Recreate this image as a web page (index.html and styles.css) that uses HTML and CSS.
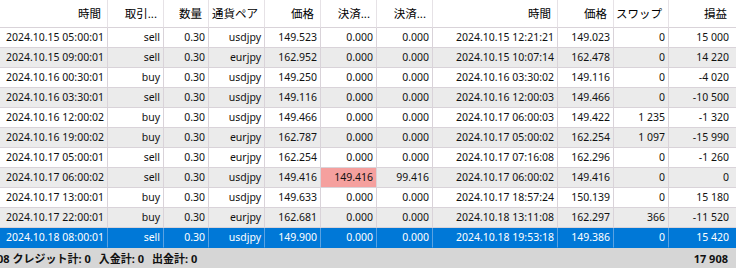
FILE: index.html
```html
<!DOCTYPE html>
<html lang="ja">
<head>
<meta charset="utf-8">
<link rel="stylesheet" href="styles.css">
</head>
<body>
<div class="view">
  <div class="row head">
    <div class="c">時間</div><div class="c">取引...</div><div class="c">数量</div><div class="c">通貨ペア</div><div class="c">価格</div><div class="c">決済...</div><div class="c">決済...</div><div class="c">時間</div><div class="c">価格</div><div class="c">スワップ</div><div class="c">損益</div>
  </div>
  <div class="row">
    <div class="c">2024.10.15 05:00:01</div><div class="c">sell</div><div class="c">0.30</div><div class="c">usdjpy</div><div class="c">149.523</div><div class="c">0.000</div><div class="c">0.000</div><div class="c">2024.10.15 12:21:21</div><div class="c">149.023</div><div class="c">0</div><div class="c">15 000</div>
  </div>
  <div class="row alt">
    <div class="c">2024.10.15 09:00:01</div><div class="c">sell</div><div class="c">0.30</div><div class="c">eurjpy</div><div class="c">162.952</div><div class="c">0.000</div><div class="c">0.000</div><div class="c">2024.10.15 10:07:14</div><div class="c">162.478</div><div class="c">0</div><div class="c">14 220</div>
  </div>
  <div class="row">
    <div class="c">2024.10.16 00:30:01</div><div class="c">buy</div><div class="c">0.30</div><div class="c">usdjpy</div><div class="c">149.250</div><div class="c">0.000</div><div class="c">0.000</div><div class="c">2024.10.16 03:30:02</div><div class="c">149.116</div><div class="c">0</div><div class="c">-4 020</div>
  </div>
  <div class="row alt">
    <div class="c">2024.10.16 03:30:01</div><div class="c">sell</div><div class="c">0.30</div><div class="c">usdjpy</div><div class="c">149.116</div><div class="c">0.000</div><div class="c">0.000</div><div class="c">2024.10.16 12:00:03</div><div class="c">149.466</div><div class="c">0</div><div class="c">-10 500</div>
  </div>
  <div class="row">
    <div class="c">2024.10.16 12:00:02</div><div class="c">buy</div><div class="c">0.30</div><div class="c">usdjpy</div><div class="c">149.466</div><div class="c">0.000</div><div class="c">0.000</div><div class="c">2024.10.17 06:00:03</div><div class="c">149.422</div><div class="c">1 235</div><div class="c">-1 320</div>
  </div>
  <div class="row alt">
    <div class="c">2024.10.16 19:00:02</div><div class="c">buy</div><div class="c">0.30</div><div class="c">eurjpy</div><div class="c">162.787</div><div class="c">0.000</div><div class="c">0.000</div><div class="c">2024.10.17 05:00:02</div><div class="c">162.254</div><div class="c">1 097</div><div class="c">-15 990</div>
  </div>
  <div class="row">
    <div class="c">2024.10.17 05:00:01</div><div class="c">sell</div><div class="c">0.30</div><div class="c">eurjpy</div><div class="c">162.254</div><div class="c">0.000</div><div class="c">0.000</div><div class="c">2024.10.17 07:16:08</div><div class="c">162.296</div><div class="c">0</div><div class="c">-1 260</div>
  </div>
  <div class="row alt">
    <div class="c">2024.10.17 06:00:02</div><div class="c">sell</div><div class="c">0.30</div><div class="c">usdjpy</div><div class="c">149.416</div><div class="c hit">149.416</div><div class="c">99.416</div><div class="c">2024.10.17 06:00:02</div><div class="c">149.416</div><div class="c">0</div><div class="c">0</div>
  </div>
  <div class="row">
    <div class="c">2024.10.17 13:00:01</div><div class="c">buy</div><div class="c">0.30</div><div class="c">usdjpy</div><div class="c">149.633</div><div class="c">0.000</div><div class="c">0.000</div><div class="c">2024.10.17 18:57:24</div><div class="c">150.139</div><div class="c">0</div><div class="c">15 180</div>
  </div>
  <div class="row alt">
    <div class="c">2024.10.17 22:00:01</div><div class="c">buy</div><div class="c">0.30</div><div class="c">eurjpy</div><div class="c">162.681</div><div class="c">0.000</div><div class="c">0.000</div><div class="c">2024.10.18 13:11:08</div><div class="c">162.297</div><div class="c">366</div><div class="c">-11 520</div>
  </div>
  <div class="row sel">
    <div class="c">2024.10.18 08:00:01</div><div class="c">sell</div><div class="c">0.30</div><div class="c">usdjpy</div><div class="c">149.900</div><div class="c">0.000</div><div class="c">0.000</div><div class="c">2024.10.18 19:53:18</div><div class="c">149.386</div><div class="c">0</div><div class="c">15 420</div>
  </div>
  <div class="total">
    <div class="sum">
      <span class="part">08 クレジット計: 0</span>
      <span class="part">入金計: 0</span>
      <span class="part">出金計: 0</span>
    </div>
    <div class="profit">17 908</div>
  </div>
</div>
</body>
</html>
```

FILE: styles.css
```css
html, body {
  margin: 0;
  padding: 0;
  background: #ffffff;
}

.view {
  width: 736px;
  overflow: hidden;
  font-family: "Noto Sans", "Noto Sans CJK JP", sans-serif;
  font-size: 10.5px;
  color: #111111;
}

.row {
  display: grid;
  grid-template-columns: 108px 56px 45px 56px 56px 56px 56px 125px 56px 55px 67px;
  width: 736px;
  background: #ffffff;
}

.row.alt {
  background: #ebebeb;
}

.c {
  box-sizing: border-box;
  height: 20px;
  line-height: 19px;
  padding-right: 3px;
  text-align: right;
  white-space: nowrap;
  overflow: hidden;
  border-right: 1px solid #d9d3d9;
  border-bottom: 1px solid #d9d3d9;
}

.c:last-child {
  border-right: none;
  padding-right: 7px;
}

.head .c {
  height: 28px;
  line-height: 27px;
  padding-right: 6px;
  font-size: 11.5px;
  color: #000000;
  border-right-color: #e6e2e6;
}

.head .c:last-child {
  padding-right: 9px;
}

.hit {
  background: #f5a09e;
}

.row.sel {
  background: #0078d7;
  color: #ffffff;
}

.row.sel .c {
  border-right-color: #5aa2e2;
  border-bottom-color: #0078d7;
}

.total {
  display: flex;
  justify-content: space-between;
  align-items: center;
  height: 20px;
  background: #d6d6d6;
  font-weight: bold;
  font-size: 11px;
  color: #111111;
}

.sum {
  display: flex;
  gap: 8px;
  margin-left: -3px;
}

.profit {
  padding-right: 8px;
}
```
